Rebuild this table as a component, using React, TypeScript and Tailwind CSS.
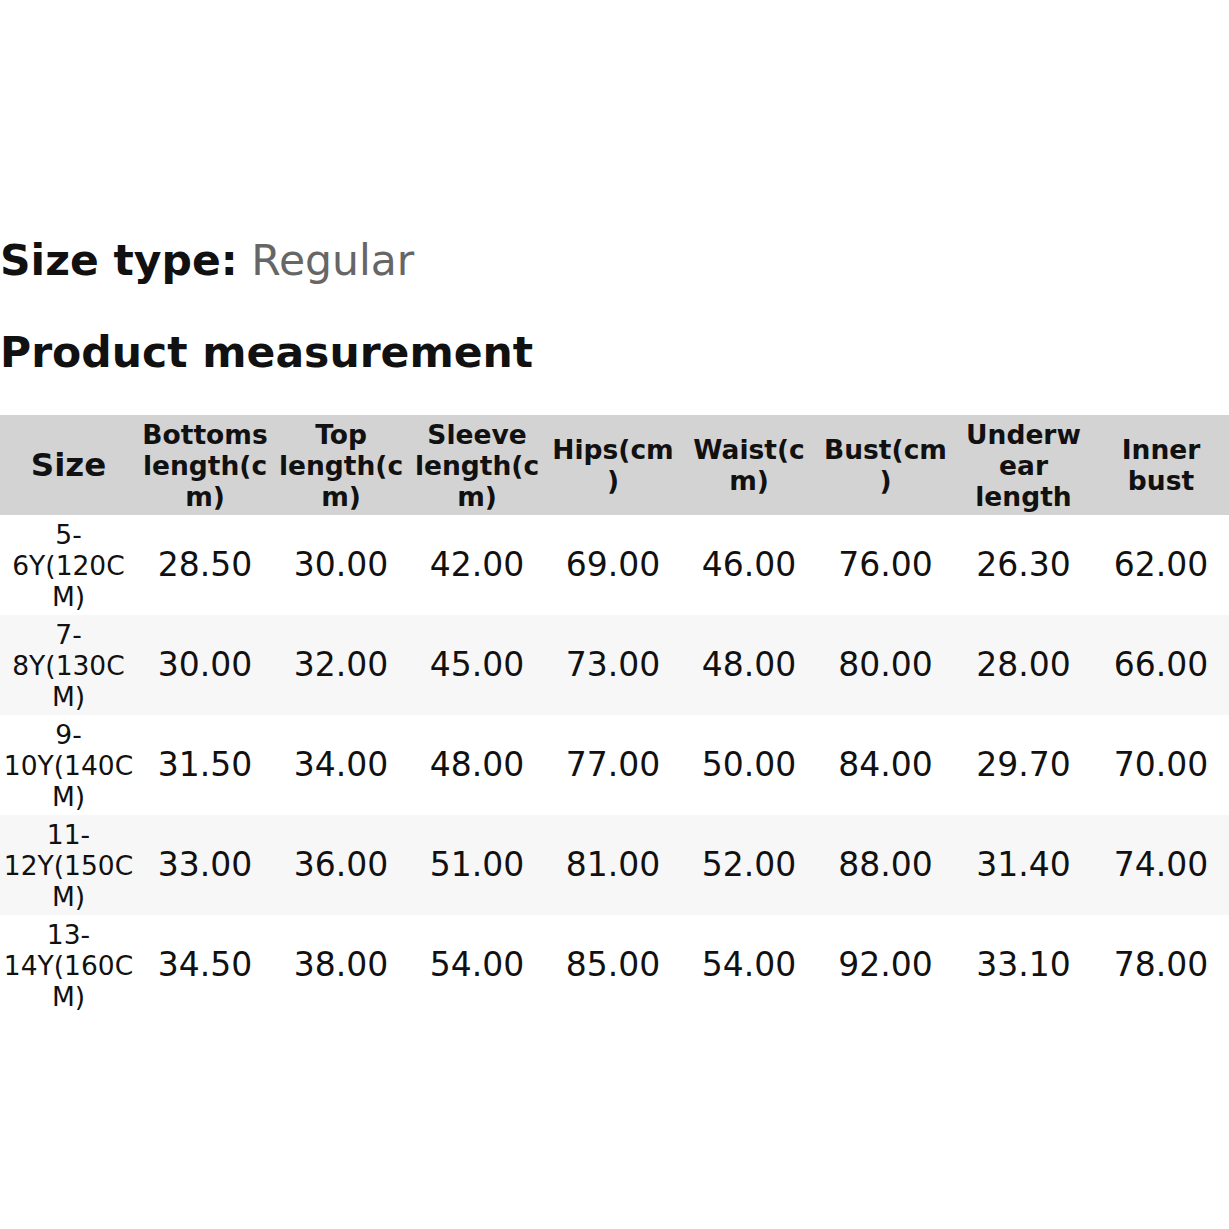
import React from "react";

const headers: { lines: string[]; big?: boolean }[] = [
  { lines: ["Size"], big: true },
  { lines: ["Bottoms", "length(c", "m)"] },
  { lines: ["Top", "length(c", "m)"] },
  { lines: ["Sleeve", "length(c", "m)"] },
  { lines: ["Hips(cm", ")"] },
  { lines: ["Waist(c", "m)"] },
  { lines: ["Bust(cm", ")"] },
  { lines: ["Underw", "ear", "length"] },
  { lines: ["Inner", "bust"] },
];

const rows: { size: string[]; vals: string[] }[] = [
  { size: ["5-", "6Y(120C", "M)"], vals: ["28.50", "30.00", "42.00", "69.00", "46.00", "76.00", "26.30", "62.00"] },
  { size: ["7-", "8Y(130C", "M)"], vals: ["30.00", "32.00", "45.00", "73.00", "48.00", "80.00", "28.00", "66.00"] },
  { size: ["9-", "10Y(140C", "M)"], vals: ["31.50", "34.00", "48.00", "77.00", "50.00", "84.00", "29.70", "70.00"] },
  { size: ["11-", "12Y(150C", "M)"], vals: ["33.00", "36.00", "51.00", "81.00", "52.00", "88.00", "31.40", "74.00"] },
  { size: ["13-", "14Y(160C", "M)"], vals: ["34.50", "38.00", "54.00", "85.00", "54.00", "92.00", "33.10", "78.00"] },
];

const cols = "grid grid-cols-[137px_136px_136px_136px_136px_136px_137px_139px_136px]";

export default function App() {
  return (
    <div
      className="w-[1229px] h-[1229px] bg-white text-[#111] overflow-hidden"
      style={{ fontFamily: '"DejaVu Sans", sans-serif' }}
    >
      <div className="pt-[236px] text-[42.5px] leading-[50px] whitespace-nowrap">
        <span className="font-bold">Size type:</span>{" "}
        <span className="text-[#666]">Regular</span>
      </div>
      <div className="mt-[42px] text-[42.5px] leading-[50px] font-bold whitespace-nowrap">
        Product measurement
      </div>
      <div className="mt-[37px]">
        <div className={`${cols} h-[100px] bg-[#d3d3d3]`}>
          {headers.map((h, i) => (
            <div
              key={i}
              className={`flex flex-col items-center justify-center text-center font-bold ${
                h.big ? "text-[32.5px] leading-[38px]" : "text-[26.5px] leading-[31px]"
              }`}
            >
              {h.lines.map((l, j) => (
                <span key={j} className="whitespace-nowrap">
                  {l}
                </span>
              ))}
            </div>
          ))}
        </div>
        {rows.map((r, i) => (
          <div
            key={i}
            className={`${cols} h-[100px] ${i % 2 === 1 ? "bg-[#f7f7f7]" : "bg-white"}`}
          >
            <div className="flex flex-col items-center justify-center text-center text-[26.5px] leading-[31px]">
              {r.size.map((l, j) => (
                <span key={j} className="whitespace-nowrap">
                  {l}
                </span>
              ))}
            </div>
            {r.vals.map((v, j) => (
              <div key={j} className="flex items-center justify-center text-[33px] leading-[38px]">
                {v}
              </div>
            ))}
          </div>
        ))}
      </div>
    </div>
  );
}
